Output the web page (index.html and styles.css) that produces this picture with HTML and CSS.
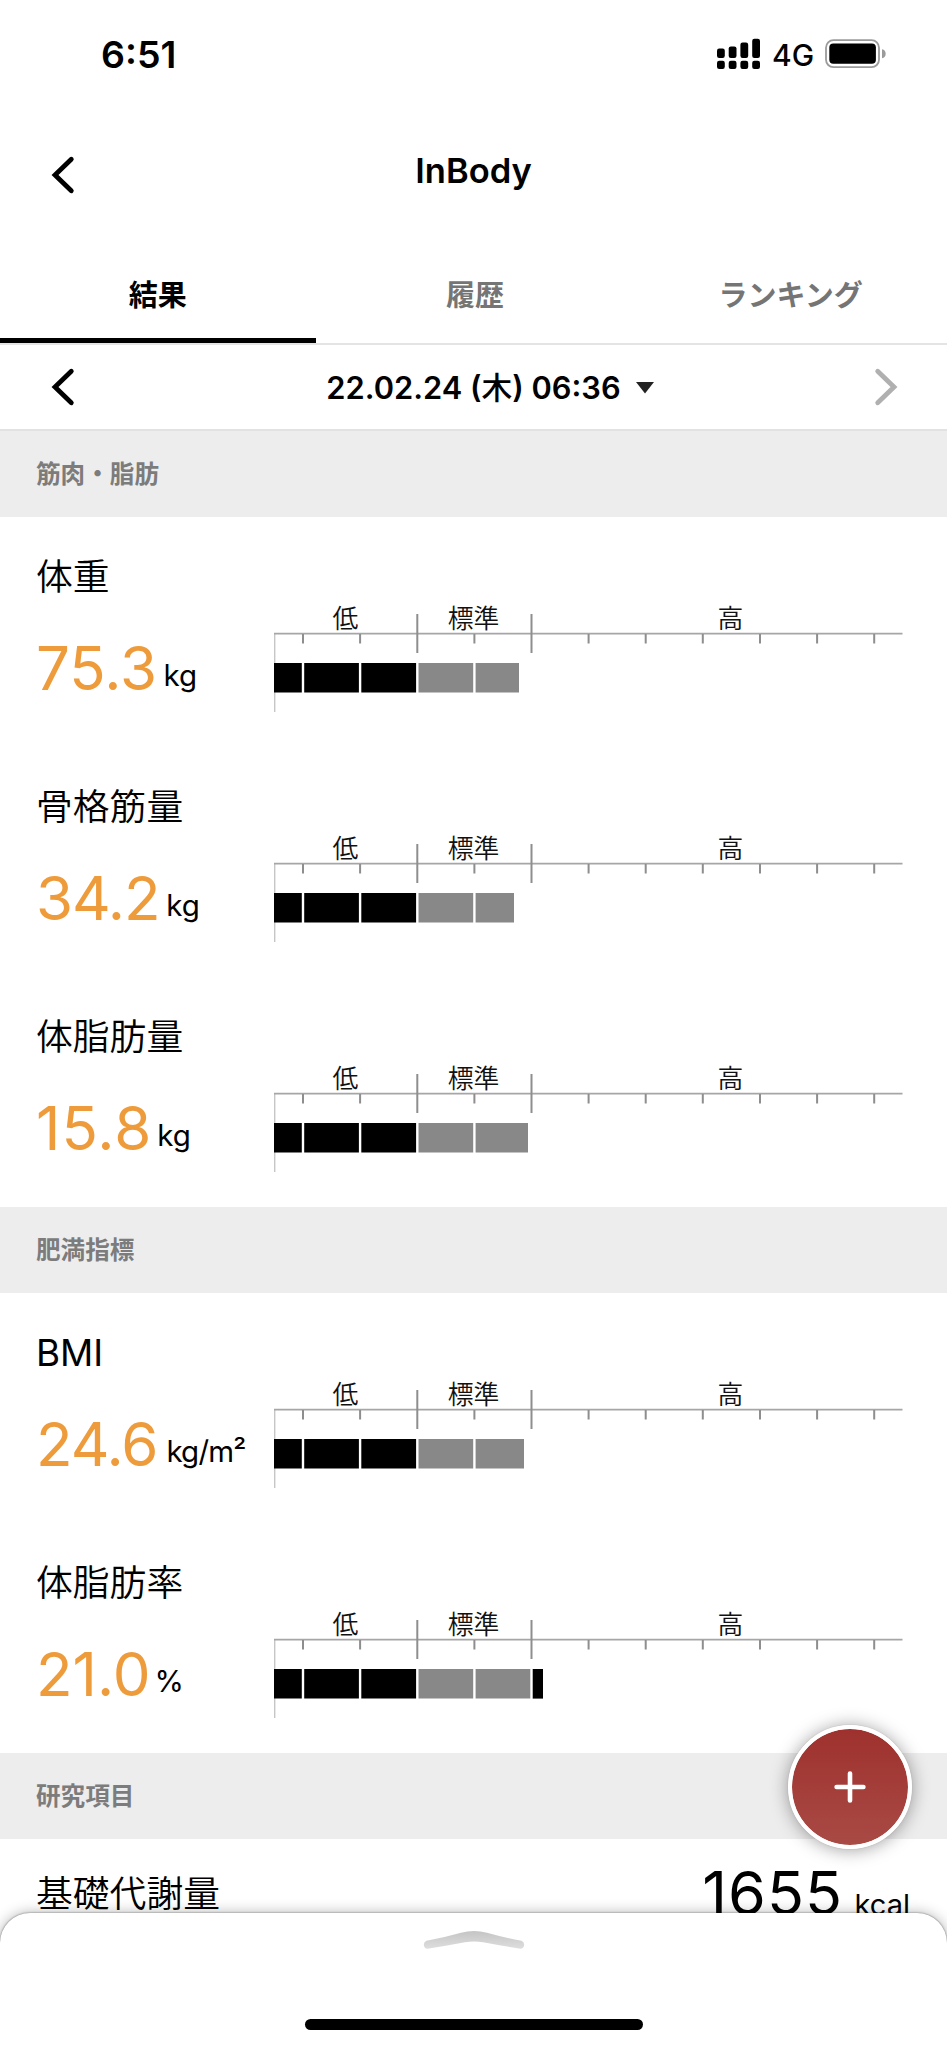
FILE: index.html
```html
<!DOCTYPE html>
<html lang="ja">
<head>
<meta charset="utf-8">
<title>InBody</title>
<link rel="stylesheet" href="styles.css">
</head>
<body>
<svg class="defs" aria-hidden="true">
  <defs>
    <g id="scale">
      <path d="M.7 20V99" stroke="#c6c6c6" stroke-width="1.4"/>
      <path d="M0 20.7H628.5" stroke="#a6a6a6" stroke-width="1.8"/>
      <path d="M29 21V30.5M86.1 21V30.5M200.4 21V30.5M314.6 21V30.5M371.7 21V30.5M428.8 21V30.5M486 21V30.5M543.1 21V30.5M600.2 21V30.5" stroke="#8e8e8e" stroke-width="2"/>
      <path d="M143.3 1V40M257.5 1V40" stroke="#8e8e8e" stroke-width="2"/>
    </g>
    <path id="gaps" d="M29 49V81M86.1 49V81M143.3 49V81M200.4 49V81M257.5 49V81" stroke="#fff" stroke-width="2.4"/>
  </defs>
</svg>
<div class="screen">
  <div class="status">
    <span class="clock">6:51</span>
    <div class="status-right">
      <svg width="44" height="32" viewBox="0 0 44 32">
        <rect x="0" y="11.5" width="7.8" height="9.5" rx="2.2"/><rect x="11.7" y="9.4" width="7.8" height="11.6" rx="2.2"/><rect x="23.4" y="5.6" width="7.8" height="15.4" rx="2.2"/><rect x="35.2" y="1.8" width="7.8" height="19.2" rx="2.2"/>
        <rect x="0" y="23.8" width="7.8" height="8.2" rx="2.2"/><rect x="11.7" y="23.8" width="7.8" height="8.2" rx="2.2"/><rect x="23.4" y="23.8" width="7.8" height="8.2" rx="2.2"/><rect x="35.2" y="23.8" width="7.8" height="8.2" rx="2.2"/>
      </svg>
      <span class="network">4G</span>
      <svg width="62" height="30" viewBox="0 0 62 30">
        <rect x="1" y="1.2" width="53" height="27" rx="7.5" fill="none" stroke="#9b9b9b" stroke-width="1.8"/>
        <rect x="4.3" y="4.6" width="46.6" height="20.2" rx="4"/>
        <path d="M57 10.3a4.6 4.6 0 0 1 0 9z" fill="#9b9b9b"/>
      </svg>
    </div>
  </div>
  <header class="header">
    <svg class="chev" width="24" height="40" viewBox="0 0 24 40"><path d="M20.3 4.2L4 20l16.3 15.8"/></svg>
    <h1>InBody</h1>
  </header>
  <nav class="tabs">
    <span class="tab active">結果</span><span class="tab">履歴</span><span class="tab">ランキング</span>
  </nav>
  <div class="date-row">
    <svg class="chev" width="24" height="40" viewBox="0 0 24 40"><path d="M20.3 4.2L4 20l16.3 15.8"/></svg>
    <div class="date"><span>22.02.24 (<span class="day">木</span>) 06:36</span><svg width="18" height="12" viewBox="0 0 18 12"><path d="M0 0h18L9 11.5z" fill="#222"/></svg></div>
    <svg class="chev next" width="24" height="40" viewBox="0 0 24 40"><path d="M3.7 4.2L20 20 3.7 35.8"/></svg>
  </div>

  <h2 class="section first">筋肉・脂肪</h2>
  <div class="item">
    <div class="info"><div class="name jp">体重</div><div class="reading"><span class="value">75.3</span><span class="unit">kg</span></div></div>
    <div class="chart">
      <div class="labels"><span>低</span><span>標準</span><span>高</span></div>
      <svg width="630" height="100"><use href="#scale"/><path d="M0 50h143v29.6H0z"/><path d="M143 50h102v29.6H143z" fill="#888"/><use href="#gaps"/></svg>
    </div>
  </div>
  <div class="item">
    <div class="info"><div class="name jp">骨格筋量</div><div class="reading"><span class="value tight">34.2</span><span class="unit">kg</span></div></div>
    <div class="chart">
      <div class="labels"><span>低</span><span>標準</span><span>高</span></div>
      <svg width="630" height="100"><use href="#scale"/><path d="M0 50h143v29.6H0z"/><path d="M143 50h97v29.6H143z" fill="#888"/><use href="#gaps"/></svg>
    </div>
  </div>
  <div class="item">
    <div class="info"><div class="name jp">体脂肪量</div><div class="reading"><span class="value wide">15.8</span><span class="unit">kg</span></div></div>
    <div class="chart">
      <div class="labels"><span>低</span><span>標準</span><span>高</span></div>
      <svg width="630" height="100"><use href="#scale"/><path d="M0 50h143v29.6H0z"/><path d="M143 50h111v29.6H143z" fill="#888"/><use href="#gaps"/></svg>
    </div>
  </div>

  <h2 class="section">肥満指標</h2>
  <div class="item">
    <div class="info"><div class="name">BMI</div><div class="reading"><span class="value tight">24.6</span><span class="unit long">kg/m²</span></div></div>
    <div class="chart">
      <div class="labels"><span>低</span><span>標準</span><span>高</span></div>
      <svg width="630" height="100"><use href="#scale"/><path d="M0 50h143v29.6H0z"/><path d="M143 50h107v29.6H143z" fill="#888"/><use href="#gaps"/></svg>
    </div>
  </div>
  <div class="item">
    <div class="info"><div class="name jp">体脂肪率</div><div class="reading"><span class="value">21.0</span><span class="unit percent">%</span></div></div>
    <div class="chart">
      <div class="labels"><span>低</span><span>標準</span><span>高</span></div>
      <svg width="630" height="100"><use href="#scale"/><path d="M0 50h143v29.6H0z"/><path d="M143 50h115v29.6H143z" fill="#888"/><path d="M257.5 50h11.5v29.6h-11.5z"/><use href="#gaps"/></svg>
    </div>
  </div>

  <h2 class="section">研究項目</h2>
  <div class="row">
    <div class="name jp">基礎代謝量</div>
    <div class="reading"><span class="value dark">1655</span><span class="unit">kcal</span></div>
  </div>

  <div class="fab"><svg width="40" height="40" viewBox="0 0 40 40"><path d="M20 6.6V33.4M6.6 20H33.4" stroke="#fff" stroke-width="4.6" stroke-linecap="round"/></svg></div>
  <div class="sheet">
    <svg class="grip" width="104" height="22" viewBox="0 0 104 22">
      <defs><linearGradient id="grip" x1="0" y1="0" x2="0" y2="1"><stop offset="0" stop-color="#c4c4c4"/><stop offset="1" stop-color="#dedede"/></linearGradient></defs>
      <path d="M4.5 10.8Q22 7.5 39 2.7Q52 -.8 65 2.7Q82 7.5 99.5 10.8A4.1 4.1 0 0 1 98.5 18.7Q80 15.8 61 12.2Q52 10.7 43 12.2Q24 15.8 5.5 18.7A4.1 4.1 0 0 1 4.5 10.8z" fill="url(#grip)"/>
    </svg>
    <div class="home"></div>
  </div>
</div>
</body>
</html>
```
FILE: styles.css
```css
* { box-sizing: border-box; margin: 0; padding: 0; }
body { background: #fff; color: #000; font-family: Inter, "Noto Sans CJK JP", sans-serif; }
svg { display: block; flex: none; }
.defs { position: absolute; width: 0; height: 0; }
.screen { position: relative; width: 947px; height: 2048px; overflow: hidden; background: #fff; }

.status { height: 108px; padding: 0 60px 0 101px; display: flex; justify-content: space-between; align-items: center; }
.clock { font-size: 37.5px; font-weight: 600; line-height: 44px; padding-top: 1px; }
.status-right { display: flex; align-items: center; }
.status-right svg:first-child { margin-bottom: 2px; }
.network { font-size: 30px; font-weight: 500; line-height: 36px; width: 42px; margin: 1px 11px 0 11px; white-space: nowrap; }

.header { position: relative; height: 132px; display: flex; align-items: center; justify-content: center; }
.header h1 { font-size: 34.5px; font-weight: 600; line-height: 42px; margin-top: -6px; }
.header .chev { position: absolute; left: 51px; top: 47px; }
.chev path { fill: none; stroke: #000; stroke-width: 4.8; stroke-linecap: round; stroke-linejoin: miter; }
.chev.next path { stroke: #b0b0b0; }

.tabs { height: 105px; display: grid; grid-template-columns: repeat(3, 1fr); border-bottom: 2px solid #e4e4e4; }
.tab { display: flex; align-items: center; justify-content: center; padding: 14px 0 0 3px; font-size: 29px; font-weight: 700; line-height: 40px; color: #757575; border-bottom: 5px solid transparent; }
.tab.active { padding-left: 0; color: #000; border-bottom-color: #000; }

.date-row { height: 84px; padding: 0 49px 0 51px; display: flex; align-items: center; justify-content: space-between; }
.date { display: flex; align-items: center; gap: 15px; margin-left: 31px; font-size: 30.8px; font-weight: 600; line-height: 40px; white-space: nowrap; padding-top: 1px; }
.day { font-weight: 500; }

.section { height: 86px; padding: 0 36px; background: #ededed; color: #7c7c7c; font-size: 24.6px; font-weight: 700; line-height: 86px; }
.section.first { height: 88px; border-top: 2px solid #e2e2e2; }

.item { height: 230px; padding-left: 36px; display: flex; }
.info { width: 238px; padding-top: 37px; }
.name { font-size: 36.8px; line-height: 46px; white-space: nowrap; }
.name.jp { font-weight: 350; }
.reading { display: flex; align-items: baseline; }
.info .reading { margin-top: 30px; }
.value { color: #ee9b3b; font-size: 60px; line-height: 76px; }
.value.tight { letter-spacing: -1px; }
.value.wide { letter-spacing: 1px; }
.value.dark { color: #000; font-size: 61px; letter-spacing: 1px; }
.unit { position: relative; top: -4px; margin-left: 6.5px; font-size: 29.5px; line-height: 36px; }
.wide + .unit { margin-left: 5px; }
.unit.long { margin-left: 9px; letter-spacing: -.8px; }
.unit.percent { margin-left: 4px; font-size: 30px; }
.chart { width: 630px; padding-top: 82px; }
.labels { display: grid; grid-template-columns: 143px 113px 401px; height: 14px; text-align: center; font-size: 25.8px; font-weight: 350; line-height: 39px; color: #111; }

.row { display: flex; justify-content: space-between; padding: 32px 37px 0 36px; }
.row .reading { margin-top: -16px; }
.row .unit { top: 0; margin-left: 11.5px; font-size: 29px; }

.fab { position: absolute; left: 787.5px; top: 1725px; width: 124px; height: 124px; border: 4.5px solid #fff; border-radius: 50%; background: linear-gradient(#9e312d, #a94a45); background-clip: padding-box; box-shadow: 0 0 1px rgba(120,90,90,.6), 0 1px 18px rgba(0,0,0,.38); display: flex; align-items: center; justify-content: center; }
.sheet { position: absolute; left: 0; bottom: 0; width: 947px; height: 135px; border-radius: 30px 30px 0 0; background: #fff; box-shadow: 0 0 2px rgba(0,0,0,.55), 0 0 14px rgba(0,0,0,.3); display: flex; flex-direction: column; align-items: center; padding: 17px 0 18px; justify-content: space-between; }
.grip { margin-left: 1px; }
.home { width: 338px; height: 11px; border-radius: 6px; background: #000; }
```
